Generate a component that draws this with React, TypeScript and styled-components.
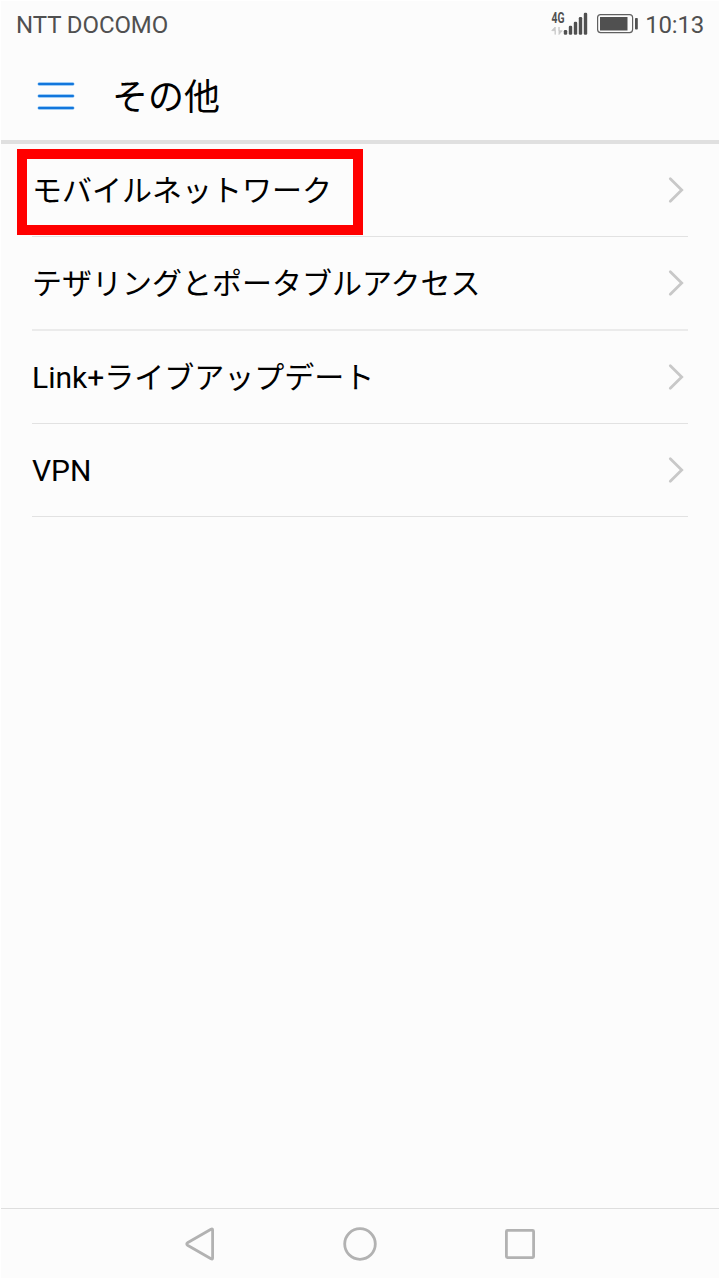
import React from 'react';
import styled, { createGlobalStyle } from 'styled-components';

const GlobalStyle = createGlobalStyle`
  * { box-sizing: border-box; }
  body { margin: 0; background: #fff; }
`;

const Screen = styled.div`
  display: flex;
  flex-direction: column;
  width: 720px;
  height: 1280px;
  border: 1px solid #fff;
  border-bottom-width: 2px;
  background: #fcfcfc;
  color: #000;
  font-family: Roboto, 'Noto Sans CJK JP', sans-serif;
  overflow: hidden;
`;

const StatusBar = styled.div`
  display: flex;
  align-items: center;
  justify-content: space-between;
  height: 46px;
  padding: 0 15px;
  color: #505050;
  font-size: 24px;
  line-height: 28px;
`;

const Carrier = styled.span`
  padding-top: 2px;
  letter-spacing: -0.08px;
`;

const StatusIcons = styled.div`
  display: flex;
  align-items: center;
`;

const Clock = styled.span`
  margin-left: 6px;
  padding-top: 2px;
  letter-spacing: -0.2px;
`;

const Header = styled.header`
  display: flex;
  align-items: center;
  height: 97px;
  padding: 5px 36px 0;
  border-bottom: 4px solid #e0e0e0;
`;

const Title = styled.h1`
  margin: 0 0 0 37px;
  padding-top: 4px;
  font-size: 36px;
  line-height: 44px;
  font-weight: 400;
`;

const List = styled.ul`
  flex: 1;
  margin: 0;
  padding: 0 31px;
  list-style: none;
`;

const Row = styled.li<{ $soft?: boolean }>`
  position: relative;
  display: flex;
  align-items: center;
  justify-content: space-between;
  height: ${(p) => (p.$soft ? 94 : 93)}px;
  border-bottom: ${(p) => (p.$soft ? '2px solid #ebebeb' : '1px solid #e2e2e2')};
`;

const Label = styled.span`
  padding-top: 2px;
  font-size: 30px;
  line-height: 40px;
  white-space: nowrap;
`;

const Highlight = styled.div`
  position: absolute;
  left: -15px;
  top: 5px;
  width: 346px;
  height: 86px;
  border: 10px solid #f00;
`;

const NavBar = styled.nav`
  display: flex;
  align-items: center;
  justify-content: center;
  gap: 124px;
  height: 70px;
  border-top: 1px solid #dedede;
`;

const SignalIcon = () => (
  <svg width="38" height="28" viewBox="550 10 38 28" fill="#505050">
    <text x="551.5" y="23" fontSize="14.5" fontWeight="700" textLength="13" lengthAdjust="spacingAndGlyphs">4G</text>
    <path d="M555.2 34.5V27L551.8 30.600H555.2ZM559 27V34.500L562.200 30.800H559Z" fill="#c8c8c8" stroke="#c8c8c8" strokeWidth="0.900" />
    <rect x="563.800" y="30" width="3.400" height="4.700" rx="1.200" />
    <rect x="568.800" y="25.700" width="3.400" height="9" rx="1.200" />
    <rect x="573.800" y="21.700" width="3.400" height="13" rx="1.200" />
    <rect x="578.800" y="17" width="3.400" height="17.700" rx="1.200" />
    <rect x="583.800" y="12.700" width="3.400" height="22" rx="1.200" />
  </svg>
);

const BatteryIcon = () => (
  <svg width="51" height="28" viewBox="588 10 51 28">
    <rect x="597.600" y="14.600" width="35" height="18" rx="3" fill="none" stroke="#606060" strokeWidth="1.200" />
    <rect x="600" y="17" width="27.500" height="13.500" fill="#505050" />
    <rect x="635" y="18" width="2.800" height="11.500" rx="0.800" fill="#505050" />
  </svg>
);

const MenuIcon = () => (
  <svg width="38" height="30" viewBox="37 81 38 30" fill="none" strokeLinecap="round">
    <path d="M39.300 84H72.700M39.300 96H72.700M39.300 108H72.700" stroke="#7fbcf2" strokeWidth="3.600" />
    <path d="M39 84H73M39 96H73M39 108H73" stroke="#1276dc" strokeWidth="2" />
  </svg>
);

const Chevron = () => (
  <svg width="20" height="30" viewBox="668 175 20 30" fill="none" stroke="#c8c8c8" strokeWidth="2.800" strokeLinecap="round">
    <path d="M670.300 178.700L681.700 190L670.300 201.300" />
  </svg>
);

const items = ['モバイルネットワーク', 'テザリングとポータブルアクセス', 'Link+ライブアップデート', 'VPN'];

export default function App() {
  return (
    <>
      <GlobalStyle />
      <Screen>
        <StatusBar>
          <Carrier>NTT DOCOMO</Carrier>
          <StatusIcons>
            <SignalIcon />
            <BatteryIcon />
            <Clock>10:13</Clock>
          </StatusIcons>
        </StatusBar>
        <Header>
          <MenuIcon />
          <Title>その他</Title>
        </Header>
        <List>
          {items.map((item, i) => (
            <Row key={item} $soft={i === 1}>
              <Label>{item}</Label>
              <Chevron />
              {i === 0 && <Highlight />}
            </Row>
          ))}
        </List>
        <NavBar>
          <svg width="36" height="36" viewBox="182 1226 36 36" fill="none" stroke="#b2b2b2" strokeWidth="2.800" strokeLinejoin="round">
            <path d="M211 1229.200Q212.600 1228.400 212.600 1230V1258Q212.600 1259.600 211 1258.800L187.500 1245.200Q186 1244 187.500 1242.800Z" />
          </svg>
          <svg width="36" height="36" viewBox="342 1226 36 36" fill="none" stroke="#b2b2b2" strokeWidth="2.800">
            <circle cx="360" cy="1244" r="15.300" />
          </svg>
          <svg width="36" height="36" viewBox="502 1226 36 36" fill="none" stroke="#b2b2b2" strokeWidth="2.800">
            <rect x="506.400" y="1230.400" width="27.200" height="27.200" rx="1" />
          </svg>
        </NavBar>
      </Screen>
    </>
  );
}
